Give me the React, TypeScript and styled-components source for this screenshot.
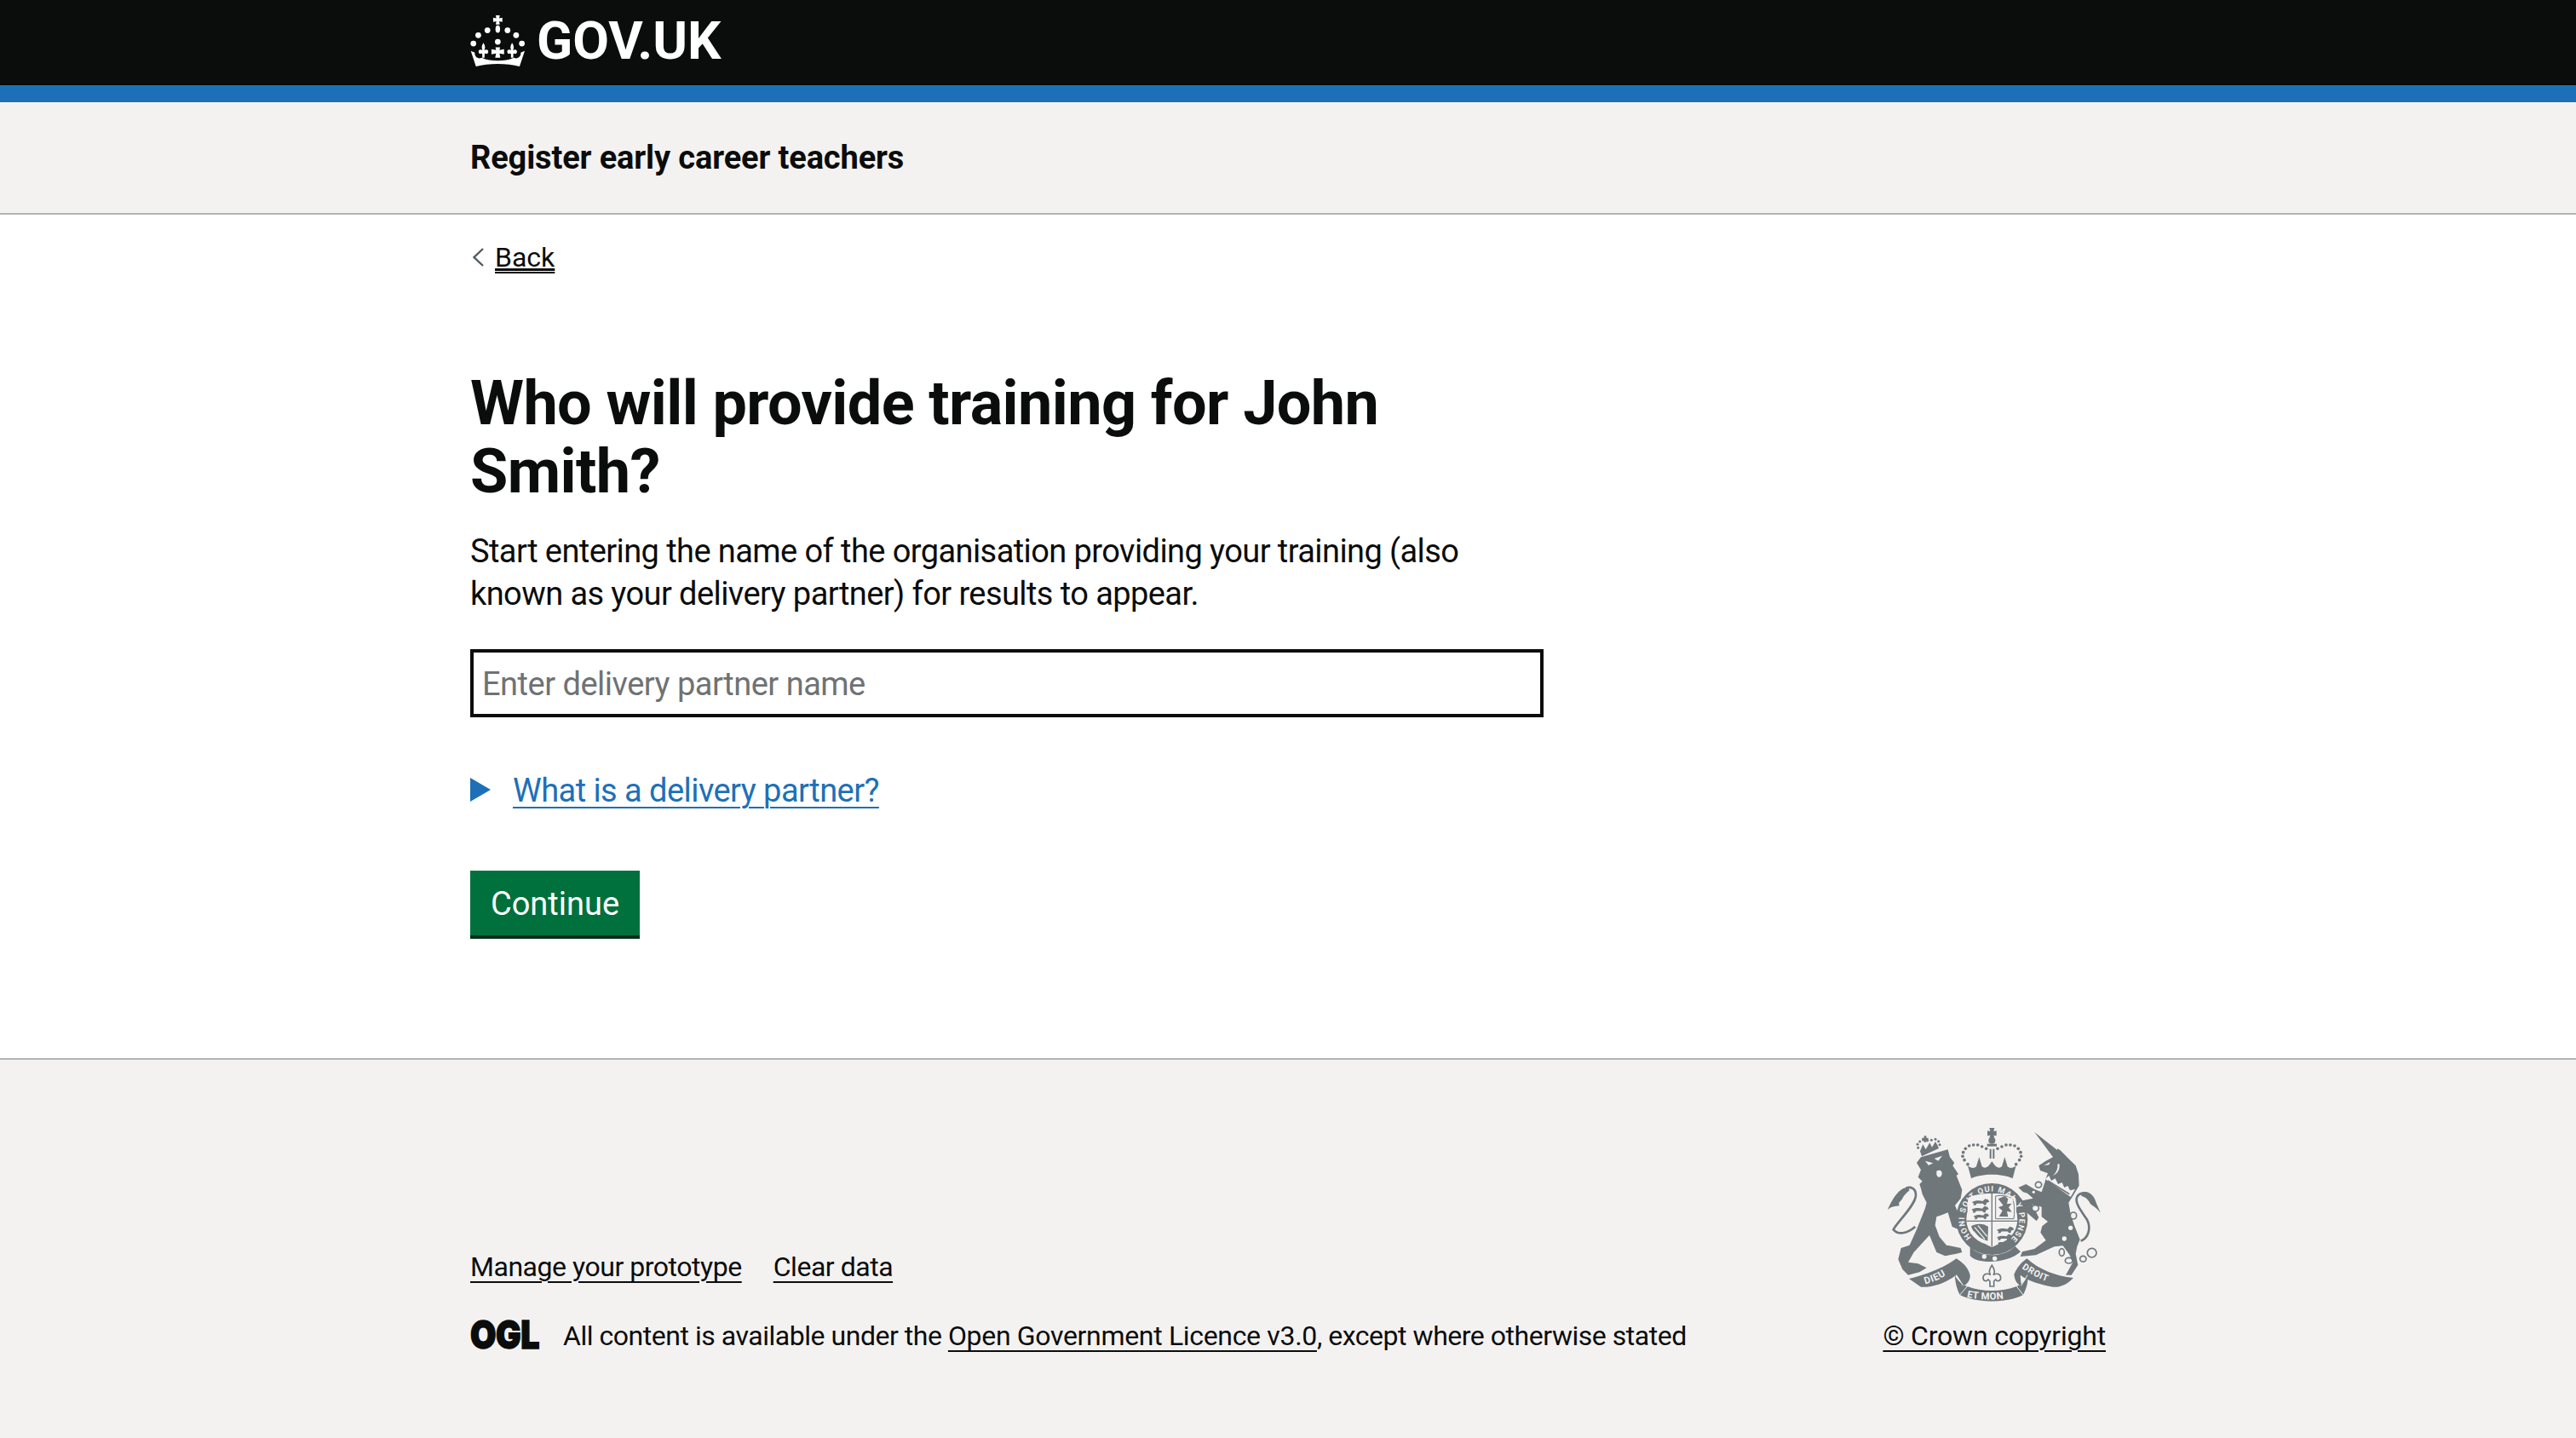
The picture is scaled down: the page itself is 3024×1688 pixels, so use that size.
import React from "react";
import styled, { createGlobalStyle } from "styled-components";

const Global = createGlobalStyle`
  html, body { margin: 0; padding: 0; background: #f3f2f1; }
  body { font-family: Roboto, "Noto Sans", Arial, sans-serif; color: #0b0c0c; }
  * { box-sizing: border-box; }
`;
const Page = styled.div`min-height: 1688px; display: flex; flex-direction: column; background: #fff;`;
const Container = styled.div`width: 1920px; margin: 0 auto;`;
const Header = styled.header`height: 120px; background: #0b0c0c; border-bottom: 20px solid #1d70b8;`;
const Logo = styled.div`display: flex; align-items: center; gap: 14px; height: 100px; color: #fff; font-size: 62px; line-height: 68px; font-weight: 700; padding-bottom: 4px;`;
const ServiceNav = styled.div`height: 132px; background: #f3f2f1; border-bottom: 2px solid #b1b4b6; display: flex; align-items: center;`;
const ServiceName = styled.div`font-size: 38px; line-height: 50px; font-weight: 700; letter-spacing: -0.13px;`;
const Main = styled.main`flex: 1; padding-bottom: 140px;`;
const BackLink = styled.a`display: flex; width: fit-content; align-items: center; gap: 13px; margin: 30px 0 0 3px; font-size: 32px; line-height: 40px; color: #0b0c0c; span { text-decoration: underline; text-decoration-thickness: 2px; text-underline-offset: 6px; }`;
const Narrow = styled.div`width: 1260px; padding-top: 112px;`;
const H1 = styled.h1`margin: 0 0 28px; font-size: 72px; line-height: 80px; font-weight: 700; letter-spacing: -0.6px;`;
const Body = styled.p`margin: 0 0 40px; font-size: 38px; line-height: 50px; letter-spacing: -0.58px;`;
const Input = styled.input`display: block; width: 100%; height: 80px; border: 4px solid #0b0c0c; padding: 2px 10px 0; font: inherit; font-size: 38px; letter-spacing: -0.5px; &::placeholder { color: #6f7274; opacity: 1; }`;
const Details = styled.div`display: flex; align-items: center; gap: 26px; margin-top: 61px; font-size: 38px; line-height: 50px; letter-spacing: -0.55px; color: #1d70b8; a { color: inherit; text-decoration-thickness: 2px; text-underline-offset: 6px; }`;
const Marker = styled.span`width: 0; height: 0; margin-bottom: 3px; border-left: 24px solid #1d70b8; border-top: 14px solid transparent; border-bottom: 14px solid transparent;`;
const Button = styled.button`display: block; margin-top: 69px; width: 199px; height: 76px; padding: 2px 0 0; border: 0; background: #00703c; box-shadow: 0 4px 0 #002d18; color: #fff; font: inherit; font-size: 38px;`;
const Footer = styled.footer`height: 446px; background: #f3f2f1; border-top: 2px solid #b1b4b6; padding-top: 80px;`;
const FootRow = styled.div`display: flex; justify-content: space-between; align-items: flex-end;`;
const Links = styled.div`display: flex; gap: 37px; margin-bottom: 41px;`;
const FootLink = styled.a<{ $spacing: string }>`font-size: 32px; line-height: 40px; color: #0b0c0c; text-decoration: underline; text-decoration-thickness: 2px; text-underline-offset: 6px; letter-spacing: ${(p) => p.$spacing};`;
const Licence = styled.div`display: flex; align-items: center; gap: 27px; font-size: 32px; line-height: 40px; letter-spacing: -0.47px;`;
const Copyright = styled.div`display: flex; flex-direction: column; align-items: center; gap: 20px;`;
const CrestMark = styled.svg`display: block;`;
const OglMark = styled.svg`display: block; flex: none; overflow: visible;`;

const Fleur = ({ x }: { x: number }) => (
  <path d={`M${x} 108 C${x + 7} 118 ${x + 7} 126 ${x + 3} 134 C${x + 8} 130 ${x + 17} 130 ${x + 17} 139 C${x + 17} 146 ${x + 10} 148 ${x + 7} 144 L${x + 4} 147 L${x + 4} 160 L${x - 4} 160 L${x - 4} 147 L${x - 7} 144 C${x - 10} 148 ${x - 17} 146 ${x - 17} 139 C${x - 17} 130 ${x - 8} 130 ${x - 3} 134 C${x - 7} 126 ${x - 7} 118 ${x} 108 Z`} />
);

const Crown = () => (
  <svg width="64" height="60" viewBox="22 12 190 178" fill="#fff">
    <path d="M111 12 H125 L123 22 L134 20 V35 L123 33 L125 44 H111 L113 33 L102 35 V20 L113 22 Z" />
    <ellipse cx="118" cy="60" rx="8" ry="13" />
    <circle cx="82" cy="64" r="10" /><circle cx="152" cy="64" r="10" />
    <circle cx="50" cy="81" r="10" /><circle cx="182" cy="81" r="10" />
    <circle cx="33" cy="110" r="10" /><circle cx="202" cy="110" r="10" />
    <circle cx="118" cy="104" r="10" />
    <Fleur x={68} /><Fleur x={168} />
    <path d="M110 123 H126 L124 133 L140 130 V148 L124 145 L127 160 H109 L112 145 L96 148 V130 L112 133 Z" />
    <path d="M24 136 L38 142 C36 154 48 166 62 160 C78 168 98 170 118 170 C138 170 158 168 174 160 C188 166 200 154 198 142 L212 136 L194 190 C150 178 86 178 42 190 Z" />
  </svg>
);

const c = "#6f777b";
const bg = "#f3f2f1";
const serif = "Roboto, sans-serif";

const Passant = ({ x, y, s = 1 }: { x: number; y: number; s?: number }) => (
  <path
    transform={`translate(${x} ${y}) scale(${s})`}
    d="M0 2 C10 -5 24 -5 36 -2 L44 -10 L54 -7 L58 0 L48 4 L48 10 L42 12 L36 6 L16 6 L12 12 L4 12 L6 6 Z"
  />
);

const crownDots = [[455,145],[440,138],[425,132],[410,132],[395,135],[382,145],[374,158],[372,172],[378,185],[390,200]];
const lionCrownDots = [[215,142],[213,130],[221,120],[233,114],[248,116],[262,115],[276,112],[287,119],[291,131]];

const Crest = () => (
  <CrestMark width="250" height="204" viewBox="108 72 750 612" fill={c}>
    <defs>
      <path id="garter" d="M403 458 A97 97 0 1 1 528 474 A97 97 0 0 1 500 486" />
      <path id="dieu" d="M240 622 C280 612 320 592 362 552 L380 540" />
      <path id="etmon" d="M386 668 C430 680 520 680 580 660" />
      <path id="droit" d="M580 566 C620 594 670 618 740 634" />
    </defs>

    <path d="M466 72 H484 L481 84 L491 82 V100 L481 98 L484 106 H466 L469 98 L459 100 V82 L469 84 Z" />
    <circle cx="475" cy="116" r="12" />
    <path d="M458 128 H492 V137 H458 Z" />
    <path d="M467 146 H473 V180 H467 Z M478 146 H484 V180 H478 Z" />
    {crownDots.map(([x, y]) => (
      <React.Fragment key={`${x}-${y}`}>
        <circle cx={x} cy={y} r="5.5" />
        <circle cx={950 - x} cy={y} r="5.5" />
      </React.Fragment>
    ))}
    <path d="M390 205 C402 215 412 215 420 208 L430 175 L440 208 C448 215 456 212 464 205 L475 190 L486 205 C494 212 502 215 510 208 L520 175 L530 208 C538 215 548 215 560 205 L548 250 C510 232 440 232 402 250 Z" />

    <circle cx="475" cy="393" r="108" fill="none" stroke={c} strokeWidth="36" />
    <path d="M392 318 C420 298 530 298 558 318 C572 395 540 468 475 492 C410 468 378 395 392 318 Z" fill={bg} />
    <path d="M386 400 H564 M475 300 V490" stroke={c} strokeWidth="4" fill="none" />
    <g>
      <Passant x={405} y={332} s={1.05} />
      <Passant x={403} y={358} s={1.05} />
      <Passant x={410} y={382} s={0.95} />
      <Passant x={492} y={430} s={1.05} />
      <Passant x={492} y={456} s={0.95} />
      <Passant x={495} y={476} s={0.6} />
      <path d="M497 322 L520 312 L532 322 L528 340 L545 338 L534 352 L545 368 L528 366 L532 385 L500 384 L512 364 L498 352 L515 345 Z" />
      <path d="M488 312 C510 308 535 312 548 322 C556 345 555 372 552 392 H488 Z" fill="none" stroke={c} strokeWidth="3" />
      <path d="M402 418 C420 406 448 408 462 420 L460 470 C432 462 410 445 402 418 Z" />
      <path d="M414 422 L450 464 M426 416 L458 454 M410 436 L436 466" stroke={bg} strokeWidth="4" fill="none" />
    </g>
    <path d="M398 490 C430 530 520 530 556 488 L576 508 C530 552 420 552 398 522 Z" />
    <circle cx="448" cy="525" r="8" fill={bg} /><circle cx="485" cy="532" r="8" fill={bg} />

    {/* lion */}
    <path d="M320 148 L327 175 L343 195 L337 205 L357 235 L350 240 L370 290 L365 320 L345 345 L380 425 L370 435 L335 420 L320 370 L300 378 L280 385 L275 415 L290 455 L315 485 L365 495 L370 510 L350 515 L310 523 L280 510 L255 450 L200 510 L180 545 L215 550 L245 565 L220 580 L180 590 L160 570 L145 535 L155 495 L185 485 L210 430 L240 355 L245 335 L230 305 L225 285 L220 270 L230 260 L215 245 L225 220 L210 195 L225 175 Z" />
    <path d="M240 188 L268 196 L252 204 Z M300 170 L272 180 L286 188 Z" fill={bg} />
    <path d="M280 224 C294 216 302 226 298 238 C294 250 282 246 280 236 Z" fill={bg} />
    <path d="M205 420 C175 445 145 450 128 430 C140 405 205 345 207 310 C208 285 190 278 172 284" fill="none" stroke={c} strokeWidth="8" />
    <path d="M180 282 C150 280 125 320 108 360 C125 345 135 350 150 345 C142 335 155 330 160 320 C165 310 175 300 185 292 Z" />
    {/* lion's crown */}
    {lionCrownDots.map(([x, y]) => <circle key={`${x}-${y}`} cx={x} cy={y} r="4.5" />)}
    <path d="M236 100 H244 V107 H251 V115 H244 V122 H236 V115 H229 V107 H236 Z" />
    <path d="M222 154 L232 130 L242 148 L256 124 L264 140 L276 120 L284 134 L288 144 L228 172 Z" />

    {/* unicorn */}
    <path d="M625 87 L705 150 L705 145 L715 150 L750 185 L770 205 L780 235 L782 275 L760 312 L745 335 L752 375 L765 415 L785 465 L775 490 L770 515 L778 555 L755 590 L735 590 L760 545 L748 518 L725 487 L695 490 L630 520 L575 525 L582 508 L625 498 L665 468 L646 440 L652 418 L672 402 L650 385 L650 350 L618 342 L640 388 L632 400 L600 372 L580 345 L582 328 L620 320 L600 302 L585 298 L568 282 L595 270 L625 288 L650 298 L662 262 L665 250 L672 232 L645 222 L640 205 L665 188 L690 175 Z" />
    <path d="M663 252 L752 315 L768 288 L750 292 L742 276 L730 282 L722 264 L708 270 L698 250 L684 258 L676 240 Z" fill={bg} />
    <path d="M672 258 L748 305" stroke={c} strokeWidth="5" fill="none" />
    <path d="M712 198 C716 215 708 232 690 240 C702 228 708 215 706 200 Z" fill={bg} />
    <path d="M658 204 L680 192 L676 202 Z" fill={bg} />
    <circle cx="752" cy="424" r="8" fill={bg} /><circle cx="730" cy="462" r="8" fill={bg} /><circle cx="622" cy="298" r="5" fill={bg} />
    <path d="M788 470 C815 460 825 425 810 395 C790 365 765 335 775 315 C782 300 800 300 815 305" fill="none" stroke={c} strokeWidth="8" />
    <path d="M790 300 C815 290 835 310 842 335 L858 372 C845 355 835 350 822 340 C815 325 805 315 790 312 Z" />
    <g fill="none" stroke={c} strokeWidth="5">
      <ellipse cx="639" cy="272" rx="11" ry="10" fill={bg} />
      <ellipse cx="628" cy="355" rx="12" ry="11" fill={bg} />
      <ellipse cx="762" cy="381" rx="11" ry="12" fill={bg} />
      <ellipse cx="721" cy="510" rx="9" ry="13" />
      <ellipse cx="746" cy="539" rx="13" ry="10" />
      <ellipse cx="796" cy="533" rx="11" ry="10" />
      <ellipse cx="827" cy="512" rx="16" ry="16" />
    </g>

    {/* motto */}
    <path d="M183 603 C220 595 300 570 350 532 C370 545 390 560 398 590 C400 610 385 625 375 628 L350 590 C310 620 260 636 225 632 Z" />
    <path d="M345 592 C355 610 370 625 388 630 C440 650 510 650 562 630 C580 622 595 610 600 590 C605 615 595 640 585 660 C530 690 420 690 362 660 C352 640 345 615 345 592 Z" />
    <path d="M553 588 C565 560 580 545 598 532 C640 570 700 595 762 600 C740 625 710 635 690 632 C650 625 600 610 575 590 L578 628 C560 620 555 605 553 588 Z" />
    <path d="M350 590 L374 628 M388 630 L362 660 M600 590 L578 628 M562 630 L585 660" stroke={bg} strokeWidth="3" fill="none" />
    <path d="M475 556 C486 572 486 582 480 590 C490 582 506 586 506 600 C506 612 494 614 488 606 L482 612 L482 630 L468 630 L468 612 L462 606 C456 614 444 612 444 600 C444 586 460 582 470 590 C464 582 464 572 475 556 Z" fill={bg} stroke={c} strokeWidth="5" />

    <text fontFamily={serif} fontWeight="700" fontSize="28" fill={bg} letterSpacing="3.4">
      <textPath href="#garter">HONI SOIT QUI MAL Y PENSE</textPath>
    </text>
    <text fontFamily={serif} fontWeight="700" fontSize="34" fill={bg} letterSpacing="2"><textPath href="#dieu">DIEU</textPath></text>
    <text fontFamily={serif} fontWeight="700" fontSize="34" fill={bg} letterSpacing="1"><textPath href="#etmon">ET MON</textPath></text>
    <text fontFamily={serif} fontWeight="700" fontSize="32" fill={bg} letterSpacing="2"><textPath href="#droit">DROIT</textPath></text>
  </CrestMark>
);

const Ogl = () => (
  <OglMark width="82" height="40" viewBox="0 0 82 40">
    <text x="0" y="35" fontFamily="Inter, Roboto, sans-serif" fontWeight="900" fontSize="45" fill="#0b0c0c" stroke="#0b0c0c" strokeWidth="1.5" textLength="81" lengthAdjust="spacingAndGlyphs">OGL</text>
  </OglMark>
);

const Chevron = () => (
  <svg width="13" height="22" viewBox="0 0 13 22" fill="none" stroke="#505a5f" strokeWidth="2.4"><path d="M12 1 L1.5 11 L12 21" /></svg>
);

export default function App() {
  return (
    <Page>
      <Global />
      <Header><Container><Logo><Crown /><span>GOV.UK</span></Logo></Container></Header>
      <ServiceNav><Container><ServiceName>Register early career teachers</ServiceName></Container></ServiceNav>
      <Main>
        <Container>
          <BackLink href="#"><Chevron /><span>Back</span></BackLink>
          <Narrow>
            <H1>Who will provide training for John Smith?</H1>
            <Body>Start entering the name of the organisation providing your training (also known as your delivery partner) for results to appear.</Body>
            <Input placeholder="Enter delivery partner name" />
            <Details><Marker /><a href="#">What is a delivery partner?</a></Details>
            <Button>Continue</Button>
          </Narrow>
        </Container>
      </Main>
      <Footer>
        <Container>
          <FootRow>
            <div>
              <Links><FootLink $spacing="-0.47px" href="#">Manage your prototype</FootLink><FootLink $spacing="-0.47px" href="#">Clear data</FootLink></Links>
              <Licence><Ogl /><span>All content is available under the <FootLink $spacing="-0.33px" href="#">Open Government Licence v3.0</FootLink>, except where otherwise stated</span></Licence>
            </div>
            <Copyright><Crest /><FootLink $spacing="-0.2px" href="#">© Crown copyright</FootLink></Copyright>
          </FootRow>
        </Container>
      </Footer>
    </Page>
  );
}
